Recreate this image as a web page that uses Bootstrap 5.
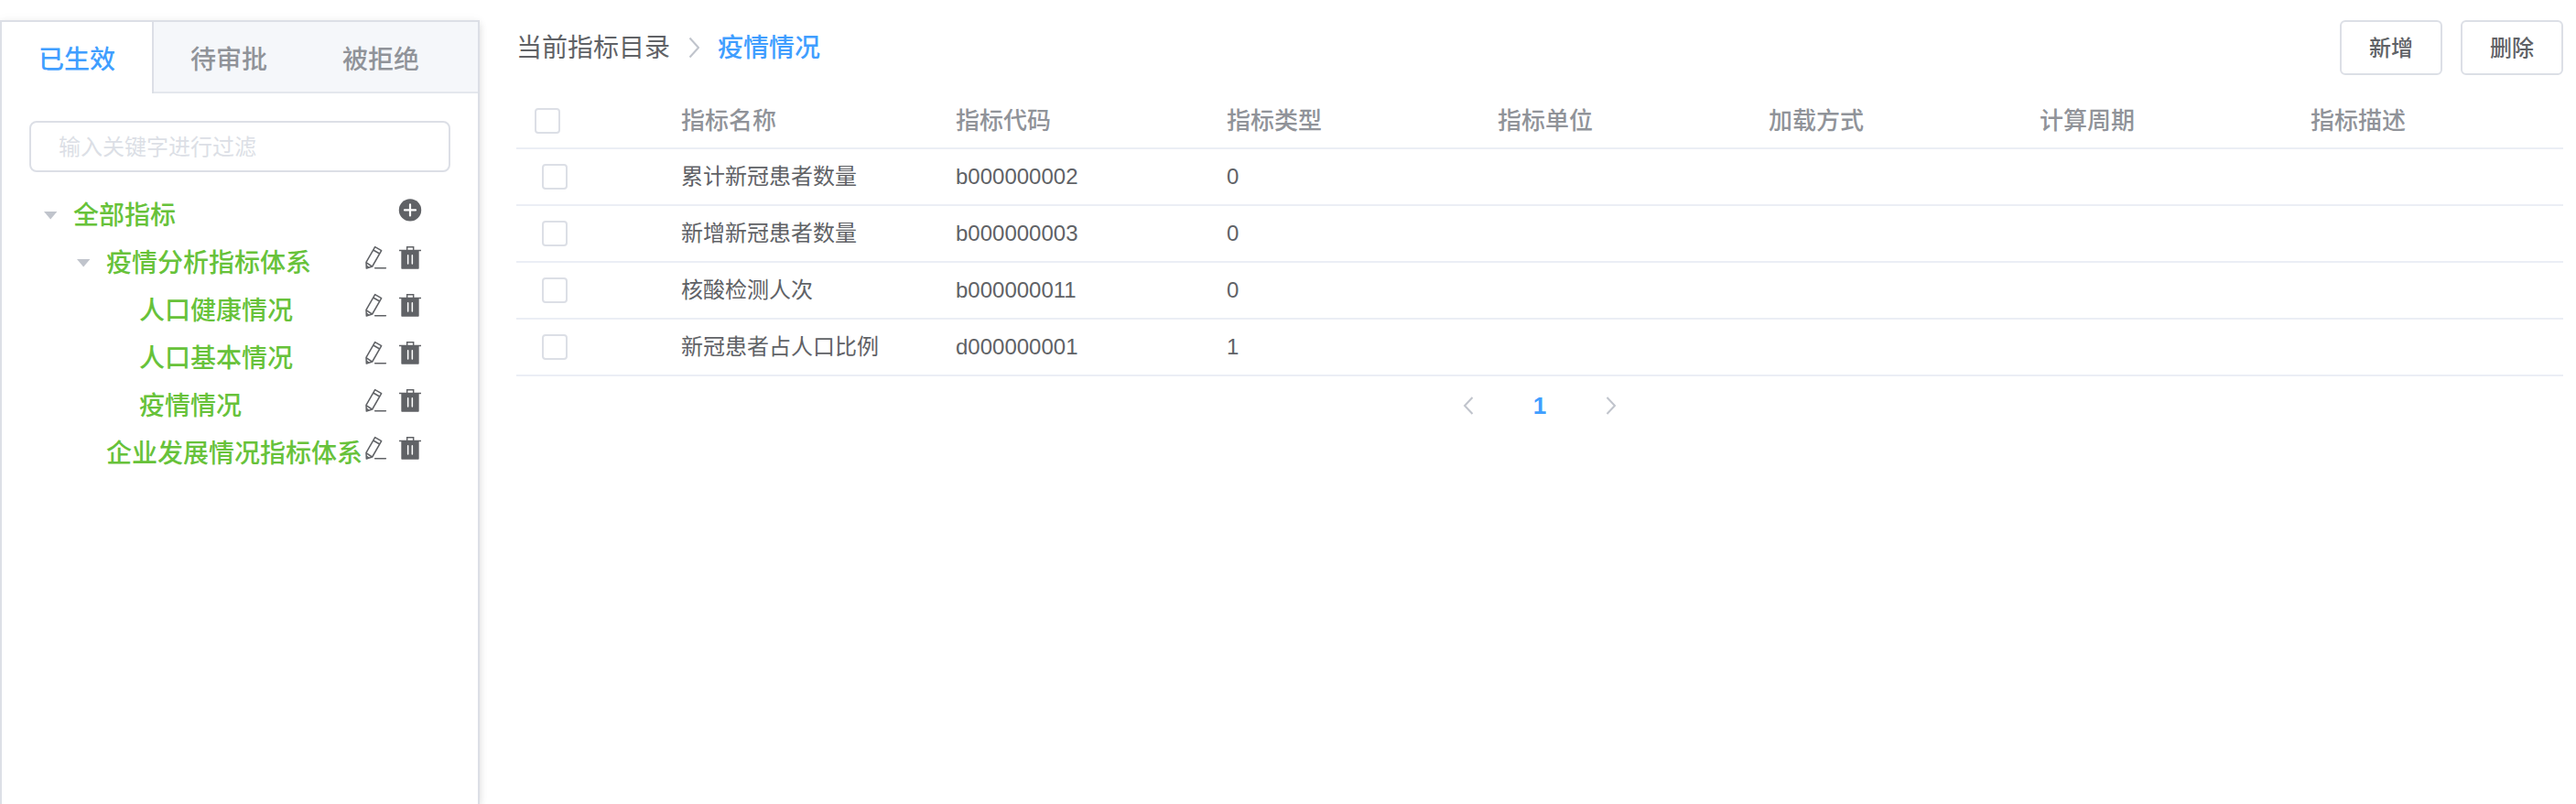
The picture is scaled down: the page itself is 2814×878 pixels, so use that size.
<!DOCTYPE html>
<html lang="zh-CN">
<head>
<meta charset="utf-8">
<title>指标目录</title>
<link href="https://cdn.jsdelivr.net/npm/bootstrap@5.3.0/dist/css/bootstrap.min.css" rel="stylesheet">
<style>
body{font-family:"Liberation Sans","Noto Sans CJK SC",sans-serif;font-size:24px;color:#606266;height:878px;overflow:hidden;background:#fff}
.page{height:878px;padding-top:22px}
.side{width:524px;height:856px;border:2px solid #dcdfe6;border-bottom:0;box-shadow:0 4px 8px rgba(0,0,0,.12),0 0 12px rgba(0,0,0,.04);background:#fff}
.side-tabs{height:78px;background:#f5f7fa;border:0;border-bottom:2px solid #e4e7ed;flex-wrap:nowrap}
.side-tabs .nav-link{height:78px;width:166px;padding:0 0 0 40px;border:0;border-radius:0;font-size:28px;font-weight:500;line-height:83px;color:#909399;margin:0}
.side-tabs .nav-link.active{color:#409eff;background:#fff;border-right:2px solid #dcdfe6}
.side-body{padding:30px 30px 0}
.filter{height:56px;border:2px solid #dcdfe6;border-radius:8px;padding:2px 30px 0;font-size:24px;color:#606266}
.filter::placeholder{color:#dcdfe6;opacity:1}
.tree{margin:20px 30px 0 0}
.node{height:52px;line-height:55px;color:#67c23a;font-size:28px;font-weight:500;white-space:nowrap}
.lv1{padding-left:16px}.lv2{padding-left:52px}.lv3{padding-left:88px}
.caret{width:32px;height:52px;flex:none}
.spacer{width:32px;flex:none}
.acts{color:#606266;gap:10px;padding-top:8px;margin-left:auto;flex:none}
.acts svg{width:28px;height:28px;display:block}
.main-pane{margin-left:40px;width:2236px}
.topbar{height:60px}
.actions{gap:20px}
.crumbs{font-size:28px;line-height:60px}
.crumbs span{padding-top:2px}
.crumbs svg{margin:0 20px}
.crumb-on{color:#409eff;font-weight:500}
.btn-plain{width:112px;height:60px;border:2px solid #dcdfe6;border-radius:6px;padding:0;font-size:24px;font-weight:500;line-height:57px;color:#606266;background:#fff}
.grid-table{margin:21px 0 0;table-layout:fixed;width:2236px;border-collapse:separate;border-spacing:0;--bs-table-bg:transparent}
.grid-table th,.grid-table td{border-bottom:2px solid #ebeef5;padding:0 20px;vertical-align:middle;line-height:40px;white-space:nowrap}
.grid-table th{height:60px;font-size:26px;font-weight:500;color:#909399}
.grid-table td{height:62px;color:#606266}
.grid-table .form-check-input{width:28px;height:28px;border:2px solid #dcdfe6;border-radius:4px;margin:0;display:block}
.grid-table td .form-check-input{margin-left:8px}
.pager{height:64px}
.pager .num{width:144px;text-align:center;color:#409eff;font-weight:700;font-size:26px;line-height:64px}
.ico-line{fill:none;stroke:#c0c4cc;stroke-width:2}
.w-check{width:160px}.w-name{width:300px}.w-col{width:296px}
</style>
</head>
<body>
<svg width="0" height="0" class="position-absolute">
  <symbol id="plus" viewBox="0 0 28 28"><circle cx="14" cy="13.4" r="12.2" fill="currentColor"/><path d="M8 13.4h12M14 7.4v12" stroke="#fff" stroke-width="2.2" stroke-linecap="round"/></symbol>
  <symbol id="edit" viewBox="48 204 84 84"><path d="M89 209 L110 221 L80 273 L61 279 L60 259 Z M83 219 L104 231 M60 260 L79 273 M61 270 L68 276" fill="none" stroke="currentColor" stroke-width="4.6" stroke-linejoin="round"/><path d="M89 278.5H124" stroke="currentColor" stroke-width="4.6" stroke-linecap="round"/></symbol>
  <symbol id="trash" viewBox="162 204 84 84"><path d="M194 219v-10h21v10" fill="none" stroke="currentColor" stroke-width="4.4"/><path d="M168 218h72v5h-7v56q0 2-2 2h-54q-2 0-2-2v-56h-7z" fill="currentColor"/><path d="M197 236v28M211 236v28" stroke="#fff" stroke-width="4.6" stroke-linecap="round"/></symbol>
  <symbol id="down" viewBox="0 0 32 52"><path d="M0 23h14.4L7.2 31.6z" fill="#c0c4cc"/></symbol>
</svg>
<div class="page d-flex align-items-start">
  <aside class="side flex-shrink-0">
    <nav class="side-tabs nav nav-tabs">
      <a class="nav-link active">已生效</a><a class="nav-link">待审批</a><a class="nav-link">被拒绝</a>
    </nav>
    <div class="side-body">
      <input class="filter form-control" placeholder="输入关键字进行过滤">
      <div class="tree">
        <div class="node lv1 d-flex"><svg class="caret"><use href="#down"/></svg><span>全部指标</span><span class="acts d-flex"><svg><use href="#plus"/></svg></span></div>
        <div class="node lv2 d-flex"><svg class="caret"><use href="#down"/></svg><span>疫情分析指标体系</span><span class="acts d-flex"><svg><use href="#edit"/></svg><svg><use href="#trash"/></svg></span></div>
        <div class="node lv3 d-flex"><i class="spacer"></i><span>人口健康情况</span><span class="acts d-flex"><svg><use href="#edit"/></svg><svg><use href="#trash"/></svg></span></div>
        <div class="node lv3 d-flex"><i class="spacer"></i><span>人口基本情况</span><span class="acts d-flex"><svg><use href="#edit"/></svg><svg><use href="#trash"/></svg></span></div>
        <div class="node lv3 d-flex"><i class="spacer"></i><span>疫情情况</span><span class="acts d-flex"><svg><use href="#edit"/></svg><svg><use href="#trash"/></svg></span></div>
        <div class="node lv2 d-flex"><i class="spacer"></i><span>企业发展情况指标体系</span><span class="acts d-flex"><svg><use href="#edit"/></svg><svg><use href="#trash"/></svg></span></div>
      </div>
    </div>
  </aside>
  <main class="main-pane flex-shrink-0">
    <div class="topbar d-flex justify-content-between align-items-center">
      <div class="crumbs d-flex align-items-center">
        <span>当前指标目录</span>
        <svg width="12" height="24"><path class="ico-line" d="M1.5 1.5L11 12L1.5 22.5"/></svg>
        <span class="crumb-on">疫情情况</span>
      </div>
      <div class="actions d-flex"><button class="btn btn-plain">新增</button><button class="btn btn-plain">删除</button></div>
    </div>
    <table class="table grid-table">
      <colgroup><col class="w-check"><col class="w-name"><col class="w-col" span="6"></colgroup>
      <thead><tr><th><input type="checkbox" class="form-check-input"></th><th>指标名称</th><th>指标代码</th><th>指标类型</th><th>指标单位</th><th>加载方式</th><th>计算周期</th><th>指标描述</th></tr></thead>
      <tbody>
        <tr><td><input type="checkbox" class="form-check-input"></td><td>累计新冠患者数量</td><td>b000000002</td><td>0</td><td></td><td></td><td></td><td></td></tr>
        <tr><td><input type="checkbox" class="form-check-input"></td><td>新增新冠患者数量</td><td>b000000003</td><td>0</td><td></td><td></td><td></td><td></td></tr>
        <tr><td><input type="checkbox" class="form-check-input"></td><td>核酸检测人次</td><td>b000000011</td><td>0</td><td></td><td></td><td></td><td></td></tr>
        <tr><td><input type="checkbox" class="form-check-input"></td><td>新冠患者占人口比例</td><td>d000000001</td><td>1</td><td></td><td></td><td></td><td></td></tr>
      </tbody>
    </table>
    <div class="pager d-flex justify-content-center align-items-center">
      <svg width="12" height="20"><path class="ico-line" d="M10.5 1L2 10L10.5 19"/></svg>
      <span class="num">1</span>
      <svg width="12" height="20"><path class="ico-line" d="M1.5 1L10 10L1.5 19"/></svg>
    </div>
  </main>
</div>
<script src="https://cdn.jsdelivr.net/npm/bootstrap@5.3.0/dist/js/bootstrap.bundle.min.js"></script>
</body>
</html>
